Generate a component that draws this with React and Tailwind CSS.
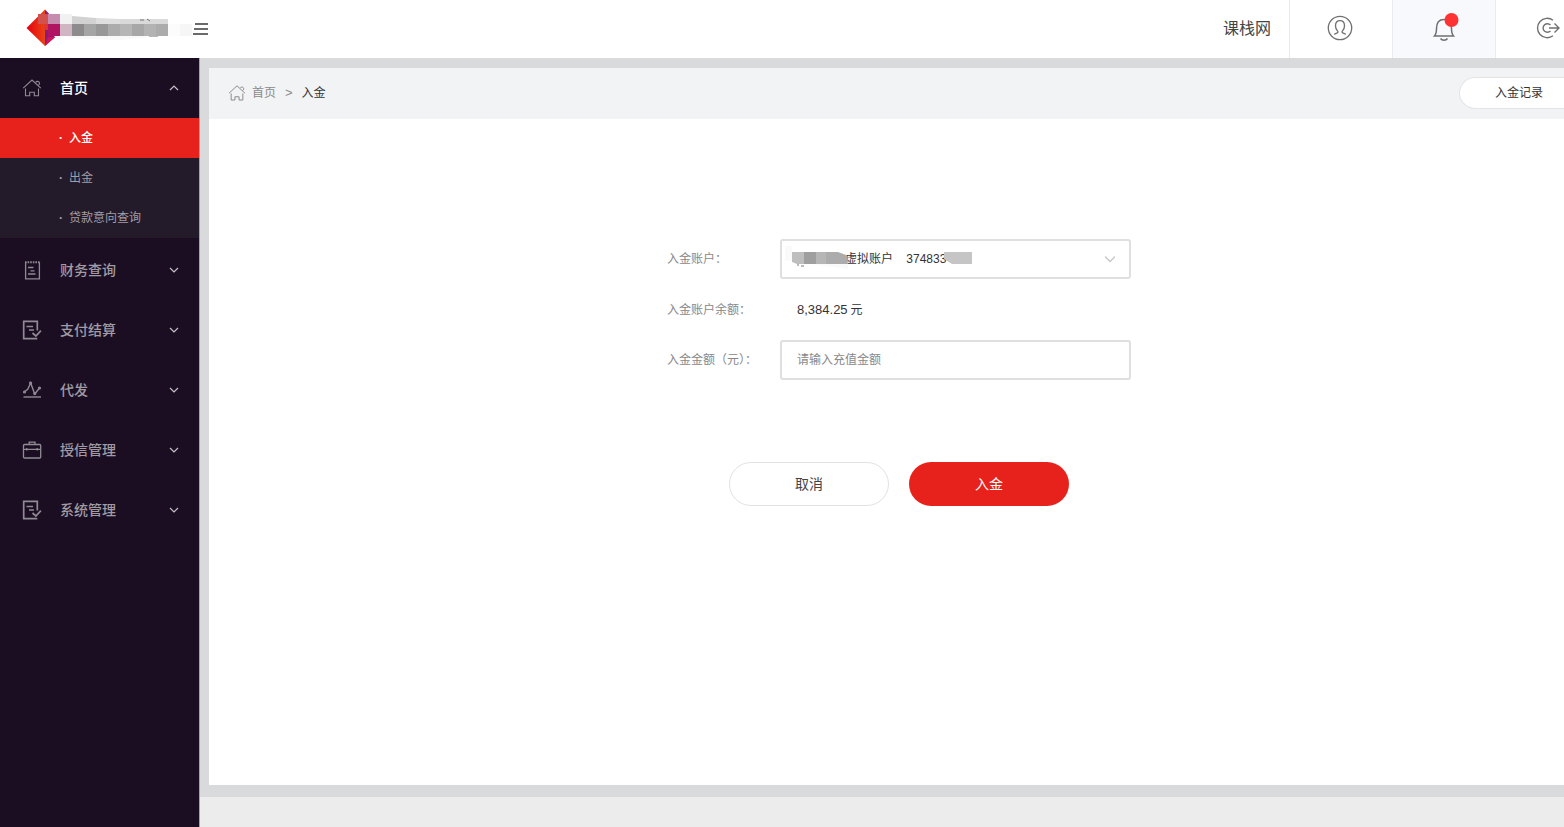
import React from "react";

const HomeIcon = ({ size = 20 }) => (
  <svg width={size} height={size} viewBox="0 0 20 20" fill="none" stroke="currentColor" strokeWidth="1.1">
    <path d="M1.2 10.2 10 2l8.8 8.2" />
    <path d="M3.5 10.5v7.3h4.2v-3.6h4.6v3.6h4.2v-7.3" />
    <path d="M13.6 4.6a2 2 0 1 1 2.6 2.6" />
  </svg>
);

const NoteIcon = () => (
  <svg width="20" height="20" viewBox="0 0 20 20" fill="none" stroke="currentColor" strokeWidth="1.3">
    <path d="M3.6 2.2v16.6h13.8V2.2" />
    <path d="M3 2.2h15" strokeDasharray="1.6 1" strokeWidth="2" />
    <path d="M6 7.5h5.5M8.5 10.8h4M6 14h7.5" />
  </svg>
);

const SheetIcon = () => (
  <svg width="20" height="20" viewBox="0 0 20 20" fill="none" stroke="currentColor" strokeWidth="1.7">
    <path d="M15.3 10.5V1.4H1.7v17.2h13.6" />
    <path d="M4.500 6.500h6.500M7 10h5" strokeWidth="1.3" />
    <path d="m10.5 13 3.4 3 5-5.3" />
  </svg>
);

const ChartIcon = () => (
  <svg width="20" height="20" viewBox="0 0 20 20" fill="none" stroke="currentColor" strokeWidth="1.4">
    <path d="m2.5 11.8 3.2-2.6L8.7 3l4 11 4.8-6" />
    <circle cx="2.5" cy="12" r="0.9" />
    <circle cx="8.6" cy="3" r="0.9" />
    <circle cx="12.8" cy="13.5" r="0.9" />
    <circle cx="17.5" cy="8" r="0.9" />
    <path d="M1.500 17h17.500" />
  </svg>
);

const CaseIcon = () => (
  <svg width="20" height="20" viewBox="0 0 20 20" fill="none" stroke="currentColor" strokeWidth="1.3">
    <rect x="1.5" y="4.5" width="17.2" height="13.5" rx="1" />
    <path d="M7.2 4.5V2.2h5.8v2.3" />
    <path d="M1.5 9.3h17.2M4.8 8v2.6M15.2 8v2.6" />
  </svg>
);

const Chevron = ({ up }) => (
  <svg width="10" height="6" viewBox="0 0 10 6" fill="none" stroke="currentColor" strokeWidth="1.2">
    <path d={up ? "M1 5 5 1l4 4" : "M1 1l4 4 4-4"} />
  </svg>
);

// Mosaic cells of the masked company name: x, y, width, height, colour
const logoCells = [
  [38, 14, 10, 10, "#d4504c"],
  [48, 14, 12, 10, "#c78bb0"],
  [60, 14, 12, 10, "#f1f1f1"],
  [44, 24, 4, 6, "#e0352f"],
  [48, 24, 12, 12, "#b01563"],
  [60, 24, 12, 12, "#d0b6c2"],
  [72, 24, 12, 12, "#8d8b8c"],
  [84, 24, 12, 12, "#a6a5a5"],
  [96, 24, 12, 12, "#999898"],
  [108, 24, 12, 12, "#adacac"],
  [120, 24, 12, 12, "#b6b6b6"],
  [132, 24, 12, 12, "#a7a7a7"],
  [144, 24, 12, 12, "#b3b3b3"],
  [156, 24, 12, 12, "#acacac"],
  [168, 24, 12, 12, "#fcfcfc"],
  [180, 24, 12, 12, "#f6f6f6"],
];

const Logo = () => (
  <svg width="192" height="58" viewBox="0 0 192 58" role="img" aria-label="Logo">
    <defs>
      <linearGradient id="diamond" x1="0" y1="0" x2="1" y2="0">
        <stop offset="0" stopColor="#e60012" />
        <stop offset="1" stopColor="#ea4514" />
      </linearGradient>
    </defs>
    <path d="M26.500 28 45 9.500V46z" fill="url(#diamond)" />
    <path d="M45 9.500 55 20v16L45 46z" fill="#8a1a7c" />
    <path d="M48 37h7.500L45 46z" fill="#d3125a" />
    <path d="M72 16l24 2v6H72z" fill="#d2d2d2" />
    <path d="M96 18l24 1v5H96z" fill="#dedede" />
    <path d="M120 19l48 0v5h-48z" fill="#d9d9d9" />
    <path d="M60 36h100l-40 4-40-1z" fill="#f9f9f9" />
    <path d="M140 20h4M147 19l3 2M149 36h9" stroke="#777" strokeWidth="1" />
    {logoCells.map(([x, y, w, h, fill]) => (
      <rect key={`${x}-${y}`} x={x} y={y} width={w} height={h} fill={fill} shapeRendering="crispEdges" />
    ))}
  </svg>
);

const Header = () => (
  <header className="flex h-[58px] justify-between bg-white">
    <div className="flex items-center">
      <Logo />
      <button type="button" aria-label="菜单" className="flex h-6 items-center text-[#6b6b6b]">
        <svg width="16" height="14" viewBox="0 0 16 14" stroke="currentColor" strokeWidth="2">
          <path d="M3 2h13M2 7h14M1 12h15" />
        </svg>
      </button>
    </div>
    <div className="flex text-[#707070]">
      <span className="flex items-center pr-[18px] text-base text-[#444]">课栈网</span>
      <button
        type="button"
        aria-label="用户"
        className="flex w-[103px] items-center justify-center border-l border-[#ebebed] pr-0.5 pb-0.5"
      >
        <svg width="26" height="26" viewBox="0 0 26 26" fill="none" stroke="currentColor" strokeWidth="1.3">
          <circle cx="13" cy="13" r="11.7" />
          <path d="M7.300 19.500c.4-1.300 3.700-1 3.700-2.500 0-1-2.500-2.500-2.500-6 0-3.400 1.800-5.300 4.500-5.300s4.500 1.900 4.500 5.300c0 3.500-2.500 5-2.500 6 0 1.500 3.300 1.200 3.700 2.500" />
        </svg>
      </button>
      <button
        type="button"
        aria-label="消息"
        className="flex w-[103px] items-center justify-center border-l border-[#ebebed] bg-[#f7f9fc] pb-0.5"
      >
        <svg width="30" height="30" viewBox="0 0 30 30" fill="none" stroke="currentColor" strokeWidth="1.500">
          <path d="M5.500 23h19c-2-2.200-2-4-2-7.500 0-5.500-2.500-9-7.500-9s-7.500 3.500-7.500 9c0 3.500 0 5.300-2 7.500z" />
          <path d="M11.500 25.500c1.500 2.200 5.500 2.200 7 0" />
          <circle cx="22.500" cy="7" r="7" fill="#fd3333" stroke="none" />
        </svg>
      </button>
      <button
        type="button"
        aria-label="退出"
        className="flex w-[69px] items-center justify-end border-l border-[#ebebed] pr-1 pb-0.5"
      >
        <svg width="24" height="24" viewBox="0 0 24 24" fill="none" stroke="currentColor" strokeWidth="1.4">
          <path d="M17 4.200a9.700 9.700 0 1 0 0 15.600" />
          <path d="M14.500 9a4.300 4.300 0 1 0 0 6" />
          <path d="M13 12h10M18.500 7.500 23 12l-4.500 4.500" />
        </svg>
      </button>
    </div>
  </header>
);

const subMenu = ["入金", "出金", "贷款意向查询"];

const menu = [
  { label: "财务查询", icon: <NoteIcon /> },
  { label: "支付结算", icon: <SheetIcon /> },
  { label: "代发", icon: <ChartIcon /> },
  { label: "授信管理", icon: <CaseIcon /> },
  { label: "系统管理", icon: <SheetIcon /> },
];

const MenuRow = ({ label, icon, open }) => (
  <button
    type="button"
    aria-expanded={!!open}
    className={`flex h-[60px] w-full items-center pr-5 pl-[22px] text-sm font-medium ${
      open ? "text-white" : "text-[#a09ba4]"
    }`}
  >
    <span className="w-[38px] text-[#8f8a94]">{icon}</span>
    <span className="flex-1 text-left">{label}</span>
    <span className="text-[#c4c1c8]">
      <Chevron up={open} />
    </span>
  </button>
);

const Sidebar = () => (
  <nav className="w-[200px] shrink-0 border-r border-[#a5a2a9] bg-[#1b0e22]">
    <MenuRow label="首页" icon={<HomeIcon />} open />
    <ul className="mb-0.5 bg-[#231b29]">
      {subMenu.map((item, index) => (
        <li key={item}>
          <a
            href="#"
            className={`flex h-10 items-center gap-1.5 pl-[59px] text-xs ${
              index === 0 ? "bg-[#e7211b] font-medium text-white" : "text-[#a29da6]"
            }`}
          >
            <span className="w-1 font-bold">·</span>
            {item}
          </a>
        </li>
      ))}
    </ul>
    {menu.map((item) => (
      <MenuRow key={item.label} label={item.label} icon={item.icon} />
    ))}
  </nav>
);

const Breadcrumb = () => (
  <div className="flex h-[51px] items-center justify-between bg-[#f2f3f5] pb-0.5 pl-[19px] text-xs">
    <div className="flex items-center text-[#8a8a8a]">
      <HomeIcon size={18} />
      <a href="#" className="ml-1.5">首页</a>
      <span className="mx-[9px] text-[13px]">&gt;</span>
      <span className="text-[#333]">入金</span>
    </div>
    <button
      type="button"
      className="h-8 w-[105px] rounded-l-full border border-r-0 border-[#e4e4e6] bg-white pl-[14px] text-[#333]"
    >
      入金记录
    </button>
  </div>
);

const DepositForm = () => (
  <form className="flex flex-col items-center pt-[120px] pl-[25px]">
    <div className="grid grid-cols-[113px_351px] gap-y-[10px] text-xs text-[#888]">
      <label htmlFor="account" className="flex items-center">入金账户：</label>
      <div className="relative h-10">
        <select
          id="account"
          className="h-full w-full appearance-none rounded-[3px] border-2 border-[#dfdfdf] bg-white pl-[63px] text-[#333]"
        >
          <option>虚拟账户&nbsp;&nbsp;&nbsp;&nbsp;374833</option>
        </select>
        {/* masked part of the account name and number */}
        <svg
          className="pointer-events-none absolute top-0 left-0"
          width="200"
          height="40"
          viewBox="0 0 200 40"
          aria-hidden="true"
        >
          <path d="M5 7h7v15H5zM30 25h38v5z" fill="#fafafa" />
          <path d="M12 13h12v12h-7l-5-2z" fill="#bebebe" />
          <path d="M24 13h12v12H24z" fill="#9f9f9f" />
          <path d="M36 13h10v12H36z" fill="#b6b6b6" />
          <path d="M46 13h12l8 3 2 9H46z" fill="#acacac" />
          <path d="M18 25v2M21 27h3" stroke="#777" />
          <path d="M164 13h28v12h-20l-8-5z" fill="#c5c5c5" />
        </svg>
        <svg
          className="pointer-events-none absolute top-4 right-4"
          width="10"
          height="8"
          viewBox="0 0 10 8"
          fill="none"
          stroke="#c8c8c8"
          strokeWidth="1.4"
        >
          <path d="M0 1.500l5 5 5-5" />
        </svg>
      </div>
      <span className="flex h-[41px] items-center">入金账户余额：</span>
      <span className="flex items-center gap-[3px] pl-[17px] text-[#333]">
        <span className="text-[13px]">8,384.25</span>元
      </span>
      <label htmlFor="amount" className="flex items-center">入金金额（元）：</label>
      <input
        id="amount"
        type="text"
        placeholder="请输入充值金额"
        className="h-10 rounded-[3px] border-2 border-[#dfdfdf] px-[15px] placeholder:text-[#888]"
      />
    </div>
    <div className="mt-[82px] flex gap-5 text-sm">
      <button type="button" className="h-11 w-40 rounded-full border border-[#e2e2e2] bg-white text-[#444]">
        取消
      </button>
      <button type="submit" className="h-11 w-40 rounded-full bg-[#e7211b] text-white">
        入金
      </button>
    </div>
  </form>
);

const App = () => {
  return (
    <div
      lang="zh-CN"
      className="flex min-h-screen flex-col bg-white font-['Liberation_Sans','Noto_Sans_CJK_SC',sans-serif]"
    >
      <Header />
      <div className="flex flex-1">
        <Sidebar />
        <div className="flex flex-1 flex-col">
          <main className="flex flex-1 flex-col bg-[#d9dadc] pt-[10px] pb-3 pl-[9px]">
            <div className="flex-1 bg-white">
              <Breadcrumb />
              <DepositForm />
            </div>
          </main>
          <footer className="h-[30px] bg-[#ececec]" />
        </div>
      </div>
    </div>
  );
};

export default App;
